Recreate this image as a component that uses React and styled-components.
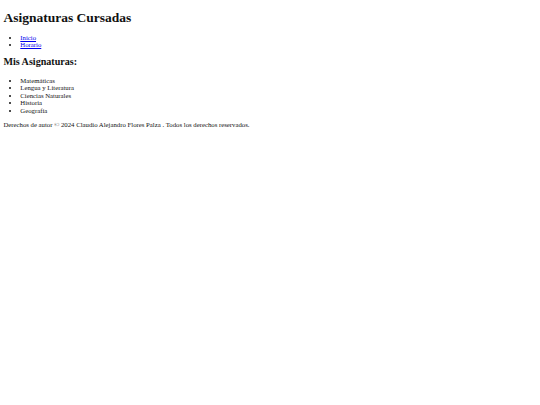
import React from "react";
import styled, { createGlobalStyle } from "styled-components";

const materias = [
  "Matemáticas",
  "Lengua y Literatura",
  "Ciencias Naturales",
  "Historia",
  "Geografía",
];

const navLinks = [
  { url: "#inicio", title: "Inicio" },
  { url: "#horario", title: "Horario" },
];

const GlobalStyle = createGlobalStyle`
  html, body {
    background: #ffffff;
  }
  body {
    margin: 3.4px;
    font-family: "Liberation Serif", "Times New Roman", serif;
    font-size: 6.75px;
    line-height: 7.5px;
    color: #111111;
  }
`;

const Title = styled.h1`
  font-size: 13.5px;
  line-height: 15.6px;
  font-weight: bold;
  margin: 6.5px 0 8.1px;
`;

const SubTitle = styled.h2`
  font-size: 10.1px;
  line-height: 11.8px;
  font-weight: bold;
  margin: 7.8px 0 8.4px;
`;

const List = styled.ul`
  list-style: disc;
  margin: 6.75px 0;
  padding-left: 16.9px;
`;

const NavLink = styled.a`
  color: #0000ee;
  text-decoration: underline;
`;

const Footer = styled.footer`
  p {
    margin: 6.75px 0;
  }
`;

const App = () => {
  return (
    <>
      <GlobalStyle />
      <header>
        <Title>Asignaturas Cursadas</Title>
        <nav>
          <List>
            {navLinks.map((item) => (
              <li key={item.title}>
                <NavLink href={item.url}>{item.title}</NavLink>
              </li>
            ))}
          </List>
        </nav>
      </header>
      <main>
        <SubTitle>Mis Asignaturas:</SubTitle>
        <List>
          {materias.map((m) => (
            <li key={m}>{m}</li>
          ))}
        </List>
      </main>
      <Footer>
        <p>
          Derechos de autor © 2024 Claudio Alejandro Flores Palza . Todos los
          derechos reservados.
        </p>
      </Footer>
    </>
  );
};

export default App;
